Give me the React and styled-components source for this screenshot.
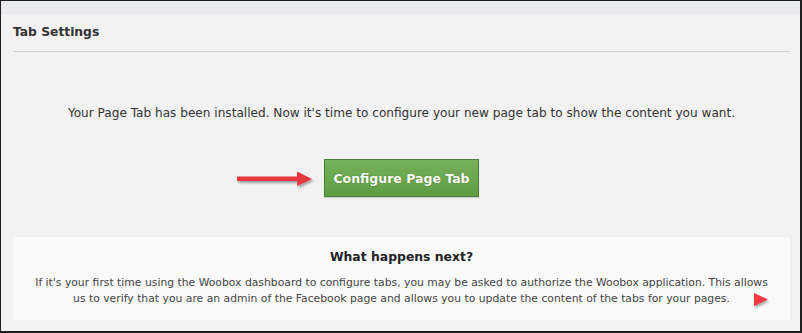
import React from 'react';
import styled, {createGlobalStyle} from 'styled-components';

const GlobalStyle = createGlobalStyle`
  html, body {
    margin: 0;
    padding: 0;
    background: #ffffff;
  }
  body {
    font-family: "DejaVu Sans", Tahoma, sans-serif;
  }
`;

const Frame = styled.div`
  box-sizing: border-box;
  width: 802px;
  height: 333px;
  border-top: 1px solid #1e1e1e;
  border-left: 1px solid #1e1e1e;
  border-right: 2px solid #1e1e1e;
  border-bottom: 2px solid #1e1e1e;
  background: #f2f2f2;
  display: flex;
  flex-direction: column;
`;

const TopStrip = styled.div`
  height: 13px;
  background: #e9eaed;
`;

const Panel = styled.div`
  flex: 1;
  padding: 0 10px 0 12px;
  display: flex;
  flex-direction: column;
`;

const Title = styled.h2`
  margin: 0;
  height: 38px;
  box-sizing: border-box;
  padding-top: 11px;
  font-size: 12.3px;
  font-weight: bold;
  color: #333333;
  border-bottom: 1px solid #cfcfcf;
`;

const Message = styled.p`
  margin: 52px 0 0;
  text-align: center;
  font-size: 12.1px;
  line-height: 18px;
  color: #333333;
`;

const ButtonRow = styled.div`
  margin-top: 37px;
  display: flex;
  justify-content: center;
`;

const ButtonWrap = styled.div`
  position: relative;
`;

const ConfigureButton = styled.button`
  width: 155px;
  height: 38px;
  padding: 0;
  white-space: nowrap;
  border: 1px solid #4b7f36;
  background: linear-gradient(#78b25c, #5e9c42);
  color: #ffffff;
  font-family: "DejaVu Sans", Tahoma, sans-serif;
  font-size: 12.5px;
  font-weight: bold;
  text-shadow: 0 0 1px rgba(40, 70, 20, 0.6);
  box-shadow: 0 1px 1px rgba(0, 0, 0, 0.15);
  cursor: pointer;
`;

const Arrow = styled.svg`
  position: absolute;
  right: 162px;
  top: 10px;
`;

const InfoBox = styled.div`
  margin-top: 40px;
  height: 83px;
  background: #fafafa;
  text-align: center;
  position: relative;
`;

const InfoTitle = styled.h3`
  margin: 0;
  padding-top: 12px;
  font-size: 12.4px;
  line-height: 16px;
  font-weight: bold;
  color: #222222;
`;

const InfoText = styled.p`
  margin: 10px 0 0;
  font-size: 10.8px;
  line-height: 16px;
  color: #444444;
`;

const Pointer = styled.svg`
  position: absolute;
  left: 739px;
  top: 54px;
`;

export default function App() {
  return (
    <>
      <GlobalStyle />
      <Frame>
        <TopStrip />
        <Panel>
          <Title>Tab Settings</Title>
          <Message>
            Your Page Tab has been installed. Now it's time to configure your new page tab to show the content you want.
          </Message>
          <ButtonRow>
            <ButtonWrap>
              <Arrow width="82" height="20" viewBox="0 0 82 20">
                <defs>
                  <filter id="arrowShadow" x="-10%" y="-50%" width="130%" height="220%">
                    <feDropShadow dx="1.5" dy="2" stdDeviation="1.2" floodColor="#000" floodOpacity="0.35" />
                  </filter>
                </defs>
                <g filter="url(#arrowShadow)">
                  <path d="M2 7.5 L62 7.5 L62 2.5 L77 10 L62 17 L62 12 L2 12 Z" fill="#e8383d" strokeLinejoin="round" />
                </g>
              </Arrow>
              <ConfigureButton>Configure Page Tab</ConfigureButton>
            </ButtonWrap>
          </ButtonRow>
          <InfoBox>
            <InfoTitle>What happens next?</InfoTitle>
            <InfoText>
              If it's your first time using the Woobox dashboard to configure tabs, you may be asked to authorize the Woobox application. This allows
              <br />
              us to verify that you are an admin of the Facebook page and allows you to update the content of the tabs for your pages.
            </InfoText>
            <Pointer width="22" height="22" viewBox="0 0 22 22">
              <defs>
                <filter id="pointerShadow" x="-30%" y="-30%" width="180%" height="180%">
                  <feDropShadow dx="1" dy="2" stdDeviation="1.2" floodColor="#000" floodOpacity="0.35" />
                </filter>
              </defs>
              <path d="M2 2 L16 8.5 L2 15 Z" fill="#ef3b3f" filter="url(#pointerShadow)" />
            </Pointer>
          </InfoBox>
        </Panel>
      </Frame>
    </>
  );
}
